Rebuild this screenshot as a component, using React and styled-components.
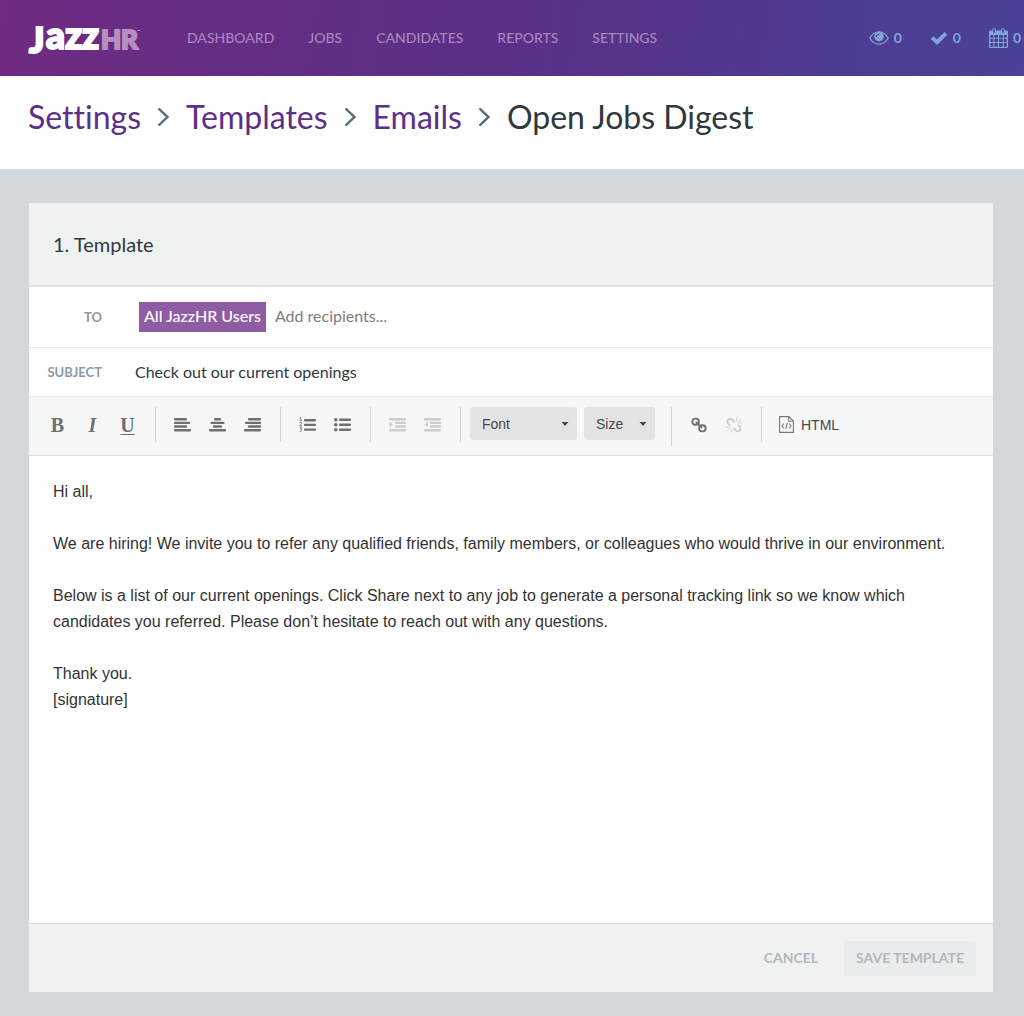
import React from "react";
import styled, { createGlobalStyle } from "styled-components";

const GlobalStyle = createGlobalStyle`
  *, *::before, *::after { box-sizing: border-box; }
  body {
    margin: 0;
    background: #d2d8dc;
    color: #2e3840;
    font-family: Lato, "Open Sans", sans-serif;
    font-variant-ligatures: none;
  }
  button, input, textarea, select { font: inherit; color: inherit; margin: 0; }
`;

const Page = styled.div`
  display: flex;
  flex-direction: column;
  min-height: 100vh;
`;

const TopBar = styled.header`
  display: flex;
  align-items: center;
  height: 76px;
  padding: 0 3px 0 28px;
  background: linear-gradient(100deg, #702b82 0%, #5a2f86 48%, #484298 100%);
`;

const LogoLink = styled.a`
  display: block;
  width: 112px;
  height: 32px;
  svg { display: block; overflow: visible; }
`;

const Nav = styled.nav`
  display: flex;
  gap: 34px;
  margin-left: 47px;
`;

const NavLink = styled.a`
  font-size: 14px;
  line-height: 20px;
  font-weight: 500;
  color: #a984bd;
  text-decoration: none;
  text-transform: uppercase;
`;

const Counters = styled.div`
  display: flex;
  align-items: center;
  gap: 28px;
  margin-left: auto;
`;

const Counter = styled.a`
  display: flex;
  align-items: center;
  gap: 5px;
  color: #82a4d8;
  font-size: 14px;
  line-height: 20px;
  font-weight: 700;
  text-decoration: none;
`;

const Crumbs = styled.nav`
  display: flex;
  align-items: center;
  gap: 17px;
  height: 93px;
  padding: 0 28px 12px;
  background: #fff;
  font-size: 32px;
  line-height: 40px;
  svg { flex: none; }
`;

const CrumbLink = styled.a`
  color: #5b2f8a;
  text-decoration: none;
`;

const CrumbCurrent = styled.h1`
  margin: 0;
  font: inherit;
`;

const Main = styled.main`
  display: flex;
  flex: 1;
  padding: 34px 31px 24px 29px;
`;

const Panel = styled.form`
  display: flex;
  flex: 1;
  flex-direction: column;
  min-width: 0;
  background: #fff;
`;

const PanelHeader = styled.div`
  display: flex;
  align-items: center;
  height: 84px;
  padding: 0 24px;
  background: #f0f2f2;
  border-bottom: 2px solid #dfe3e6;
`;

const PanelTitle = styled.h2`
  margin: 0;
  font-size: 20px;
  line-height: 28px;
  font-weight: 400;
`;

const Field = styled.div`
  display: flex;
  align-items: center;
  height: ${(p) => p.$height}px;
  border-bottom: 1px solid #e9ecee;
`;

const FieldLabel = styled.label`
  width: 73px;
  flex: none;
  margin-right: ${(p) => p.$gap}px;
  color: #8d9aa5;
  font-size: 13px;
  line-height: 20px;
  font-weight: 700;
  text-align: right;
  text-transform: uppercase;
`;

const Chip = styled.button`
  height: 30px;
  padding: 0 5px 3px;
  border: 0;
  background: #8f5ba3;
  color: #fff;
  font-size: 16px;
  font-weight: 500;
`;

const TextInput = styled.input`
  flex: 1;
  min-width: 0;
  padding: 0;
  border: 0;
  outline: 0;
  background: none;
  font-size: 16px;
  line-height: 24px;
  &::placeholder { color: #7d7d7d; opacity: 1; }
`;

const RecipientInput = styled(TextInput)`
  margin-left: 9px;
  padding-bottom: 2px;
`;

const Toolbar = styled.div`
  display: flex;
  align-items: flex-start;
  flex: none;
  height: 59px;
  padding: 10px 2px;
  background: #f6f8f8;
  border-bottom: 1px solid #dfe2e4;
  color: #6d706f;
`;

const Group = styled.div`
  display: flex;
  align-items: center;
  gap: ${(p) => p.$gap || 0}px;
  height: ${(p) => p.$height || 35}px;
  padding: 0 ${(p) => p.$end || 10}px 0 9px;
  border-right: ${(p) => (p.$last ? 0 : 1)}px solid #cfd3da;
`;

const Tool = styled.button`
  display: flex;
  align-items: center;
  justify-content: center;
  width: 35px;
  height: 35px;
  padding: 0;
  border: 0;
  background: none;
  &:disabled { color: #cbcecd; }
`;

const LetterTool = styled(Tool)`
  font-family: "Liberation Serif", serif;
  font-size: 20px;
  line-height: 24px;
  font-weight: 700;
  font-style: ${(p) => (p.$italic ? "italic" : "normal")};
  text-decoration: ${(p) => (p.$underline ? "underline 1px" : "none")};
  text-underline-offset: 2px;
`;

const SelectBox = styled.div`
  display: grid;
  align-items: center;
  align-self: flex-start;
  width: ${(p) => p.$width}px;
  color: #474747;
  svg { grid-area: 1 / 1; justify-self: end; margin-right: 8px; pointer-events: none; }
`;

const Select = styled.select`
  grid-area: 1 / 1;
  width: 100%;
  height: 33px;
  padding: 0 12px;
  appearance: none;
  border: 0;
  border-radius: 3px;
  background: #e3e3e3;
  font-family: "Liberation Sans", Arial, sans-serif;
  font-size: 14px;
`;

const HtmlButton = styled.button`
  display: flex;
  align-items: center;
  gap: 7px;
  height: 35px;
  padding: 0 8px;
  border: 0;
  background: none;
  color: #474747;
  font-family: "Liberation Sans", Arial, sans-serif;
  font-size: 14px;
`;

const Editor = styled.textarea`
  display: block;
  flex: 1;
  width: 100%;
  min-height: 320px;
  padding: 23px 24px;
  border: 0;
  outline: 0;
  resize: none;
  background: #fff;
  color: #333;
  font-family: "Liberation Sans", Arial, sans-serif;
  font-size: 16px;
  line-height: 26px;
`;

const PanelFooter = styled.div`
  display: flex;
  align-items: center;
  justify-content: flex-end;
  gap: 14px;
  height: 69px;
  padding: 0 17px;
  background: #f0f2f2;
  border-top: 1px solid #d5dade;
`;

const Action = styled.button`
  height: 35px;
  padding: 0 12px 1px;
  border: 0;
  border-radius: 4px;
  background: ${(p) => (p.$filled ? "#e9eced" : "none")};
  color: #b1b8be;
  font-size: 14px;
  font-weight: 700;
  text-transform: uppercase;
`;

const Logo = () => (
  <svg width="112" height="32" viewBox="0 0 112 32" role="img" aria-label="JazzHR">
    <g fontFamily="Lato, sans-serif" fontWeight="900" strokeLinejoin="miter">
      <text x="1" y="31" fontSize="36" fill="#fff" stroke="#fff" strokeWidth="2">J</text>
      <text x="18" y="27" fontSize="37" fill="#fff" stroke="#fff" strokeWidth="2">azz</text>
      <text x="73" y="27" fontSize="26" fill="#b48fc0" stroke="#b48fc0" strokeWidth="2">HR</text>
    </g>
    <path d="M109.500 8.500H112" stroke="#b48fc0" />
  </svg>
);

const EyeIcon = () => (
  <svg width="20" height="14" viewBox="0 0 20 14" aria-hidden="true">
    <path d="M.8 7C3 3.100 6.200.8 10 .8S17 3.100 19.200 7C17 10.900 13.800 13.200 10 13.200S3 10.900.8 7Z" fill="none" stroke="currentColor" strokeWidth="1.300" />
    <circle cx="10" cy="5.600" r="4.800" fill="currentColor" />
    <path d="M7.200 5.800A2.800 2.800 0 0 1 10 3" fill="none" stroke="#4c3b92" strokeWidth="1" strokeLinecap="round" />
  </svg>
);

const CheckIcon = () => (
  <svg width="18" height="14" viewBox="0 0 18 14" aria-hidden="true">
    <path d="M2.200 6.600 7 11.200 15.900 2.300" fill="none" stroke="currentColor" strokeWidth="4" />
  </svg>
);

const CalendarIcon = () => (
  <svg width="19" height="20" viewBox="0 0 19 20" aria-hidden="true">
    <path
      fill="currentColor"
      fillRule="evenodd"
      d="M1.500 2.500H17.500Q19 2.500 19 4V18.500Q19 20 17.500 20H1.500Q0 20 0 18.500V4Q0 2.500 1.500 2.500ZM1.300 7v2.700h3V7ZM5.300 7v2.700h3.700V7ZM10 7v2.700h3.700V7ZM14.700 7v2.700h3V7ZM1.300 10.700v3.300h3v-3.300ZM5.300 10.700v3.300h3.700v-3.300ZM10 10.700v3.300h3.700v-3.300ZM14.700 10.700v3.300h3v-3.300ZM1.300 15v3.700h3V15ZM5.300 15v3.700h3.700V15ZM10 15v3.700h3.700V15ZM14.700 15v3.700h3V15Z"
    />
    <rect x="3.800" y=".5" width="2.600" height="4.800" rx="1.200" fill="#4a4096" stroke="currentColor" />
    <rect x="12.600" y=".5" width="2.600" height="4.800" rx="1.200" fill="#4a4096" stroke="currentColor" />
  </svg>
);

const Chevron = () => (
  <svg width="11" height="18" viewBox="0 0 11 18" aria-hidden="true">
    <path d="M1.200 1.200 9.600 9 1.200 16.800" fill="none" stroke="#5a6c7a" strokeWidth="2.400" strokeLinecap="round" />
  </svg>
);

const Lines = ({ rows, children }) => (
  <svg width="17" height="15" viewBox="0 0 17 15" aria-hidden="true">
    {rows.map(([x, y, w]) => (
      <rect key={y} x={x} y={y} width={w} height="2.400" rx=".8" fill="currentColor" />
    ))}
    {children}
  </svg>
);

const alignments = [
  ["Align left", [[0, 1, 13], [0, 4.7, 16], [0, 8.300, 13], [0, 12, 17]]],
  ["Align center", [[5, 1, 7], [1.500, 4.700, 14], [4, 8.300, 9], [0, 12, 17]]],
  ["Align right", [[4, 1, 13], [1, 4.700, 16], [4, 8.300, 13], [0, 12, 17]]],
];

const NumberedIcon = () => (
  <Lines rows={[[5, 2, 12], [5, 6.700, 12], [5, 11.400, 12]]}>
    <path
      d="M.8.800 1.800.300V3.700M.6 3.700H3M.6 5.700Q2.800 5 2.600 6.500L.7 8.900H3M.7 10.700H2.600L1.600 12.200Q3 12.300 2.700 13.600 2.200 14.800.6 14.200"
      fill="none"
      stroke="currentColor"
      strokeWidth=".9"
    />
  </Lines>
);

const BulletIcon = () => (
  <Lines rows={[[5, 1.500, 12], [5, 6.500, 12], [5, 11.500, 12]]}>
    {[2.7, 7.7, 12.7].map((y) => (
      <circle key={y} cx="1.800" cy={y} r="1.800" fill="currentColor" />
    ))}
  </Lines>
);

const indentRows = [[0, 1, 17], [6, 4.700, 11], [6, 8.300, 11], [0, 12, 17]];

const IndentIcon = () => (
  <Lines rows={indentRows}>
    <path d="M.5 4.500 4 7.500.5 10.500Z" fill="currentColor" />
  </Lines>
);

const OutdentIcon = () => (
  <Lines rows={indentRows}>
    <path d="M4 4.500.5 7.500 4 10.500Z" fill="currentColor" />
  </Lines>
);

const Caret = () => (
  <svg width="8" height="4" viewBox="0 0 8 4" aria-hidden="true">
    <path d="M.5 0H7.500L4 4Z" fill="currentColor" />
  </svg>
);

const LinkIcon = () => (
  <svg width="16" height="16" viewBox="0 0 16 16" aria-hidden="true">
    <g fill="none" stroke="currentColor" strokeWidth="1.900">
      <rect x="1.400" y="1.600" width="6.400" height="6.200" rx="2.800" />
      <rect x="8.200" y="8.200" width="6.400" height="6.200" rx="2.800" />
      <path d="M5.400 5.600 10.600 10.400" strokeLinecap="round" />
    </g>
  </svg>
);

const UnlinkIcon = () => (
  <svg width="16" height="16" viewBox="0 0 16 16" aria-hidden="true">
    <g fill="none" stroke="currentColor" strokeLinecap="round">
      <path d="M3.500 8 2 6.200Q.6 4.200 2.300 2.500 4.200 1 6 2.500L8 4.500M8 11.500l2 2q1.900 1.500 3.700 0 1.700-1.800.3-3.700L12.500 8" strokeWidth="1.900" />
      <path d="M10.500 3.800 11 .8M12 5l2.700-2.300M12.800 6.200l2.700-.4M5.500 12.200 5 15.200M4 11l-2.700 2.300M3.200 9.800l-2.700.4" strokeWidth=".9" />
    </g>
  </svg>
);

const SourceIcon = () => (
  <svg width="15" height="17" viewBox="0 0 15 17" aria-hidden="true">
    <g fill="none" stroke="#777a79" strokeWidth="1.100">
      <path d="M.6.600H10L14.400 5V16.400H.6ZM9.700.600V5.300H14.400" />
      <path d="M5 7.500 2.900 10 5 12.500M10 7.500 12.100 10 10 12.500M8.400 6.800 6.600 13.200" />
    </g>
  </svg>
);

const message = `Hi all,

We are hiring! We invite you to refer any qualified friends, family members, or colleagues who would thrive in our environment.

Below is a list of our current openings. Click Share next to any job to generate a personal tracking link so we know which candidates you referred. Please don’t hesitate to reach out with any questions.

Thank you.
[signature]`;

export default function App() {
  return (
    <Page>
      <GlobalStyle />
      <TopBar>
        <LogoLink href="#home"><Logo /></LogoLink>
        <Nav>
          {["Dashboard", "Jobs", "Candidates", "Reports", "Settings"].map((item) => (
            <NavLink key={item} href={`#${item.toLowerCase()}`}>{item}</NavLink>
          ))}
        </Nav>
        <Counters>
          <Counter href="#watching"><EyeIcon />0</Counter>
          <Counter href="#tasks"><CheckIcon />0</Counter>
          <Counter href="#calendar"><CalendarIcon />0</Counter>
        </Counters>
      </TopBar>
      <Crumbs>
        {["Settings", "Templates", "Emails"].map((item) => (
          <React.Fragment key={item}>
            <CrumbLink href={`#${item.toLowerCase()}`}>{item}</CrumbLink>
            <Chevron />
          </React.Fragment>
        ))}
        <CrumbCurrent>Open Jobs Digest</CrumbCurrent>
      </Crumbs>
      <Main>
        <Panel onSubmit={(e) => e.preventDefault()}>
          <PanelHeader>
            <PanelTitle>1. Template</PanelTitle>
          </PanelHeader>
          <Field $height={61}>
            <FieldLabel htmlFor="to" $gap={37}>To</FieldLabel>
            <Chip type="button">All JazzHR Users</Chip>
            <RecipientInput id="to" type="text" placeholder="Add recipients..." />
          </Field>
          <Field $height={49}>
            <FieldLabel htmlFor="subject" $gap={33}>Subject</FieldLabel>
            <TextInput id="subject" type="text" defaultValue="Check out our current openings" />
          </Field>
          <Toolbar>
            <Group>
              <LetterTool type="button">B</LetterTool>
              <LetterTool type="button" $italic>I</LetterTool>
              <LetterTool type="button" $underline>U</LetterTool>
            </Group>
            <Group>
              {alignments.map(([name, rows]) => (
                <Tool key={name} type="button" aria-label={name}><Lines rows={rows} /></Tool>
              ))}
            </Group>
            <Group>
              <Tool type="button" aria-label="Numbered list"><NumberedIcon /></Tool>
              <Tool type="button" aria-label="Bulleted list"><BulletIcon /></Tool>
            </Group>
            <Group>
              <Tool type="button" aria-label="Indent" disabled><IndentIcon /></Tool>
              <Tool type="button" aria-label="Outdent" disabled><OutdentIcon /></Tool>
            </Group>
            <Group $gap={7} $height={39} $end={16}>
              <SelectBox $width={107}>
                <Select aria-label="Font"><option>Font</option></Select>
                <Caret />
              </SelectBox>
              <SelectBox $width={71}>
                <Select aria-label="Size"><option>Size</option></Select>
                <Caret />
              </SelectBox>
            </Group>
            <Group>
              <Tool type="button" aria-label="Insert link"><LinkIcon /></Tool>
              <Tool type="button" aria-label="Remove link" disabled><UnlinkIcon /></Tool>
            </Group>
            <Group $last>
              <HtmlButton type="button"><SourceIcon />HTML</HtmlButton>
            </Group>
          </Toolbar>
          <Editor aria-label="Message" defaultValue={message} spellCheck={false} />
          <PanelFooter>
            <Action type="button">Cancel</Action>
            <Action type="submit" $filled>Save Template</Action>
          </PanelFooter>
        </Panel>
      </Main>
    </Page>
  );
}
